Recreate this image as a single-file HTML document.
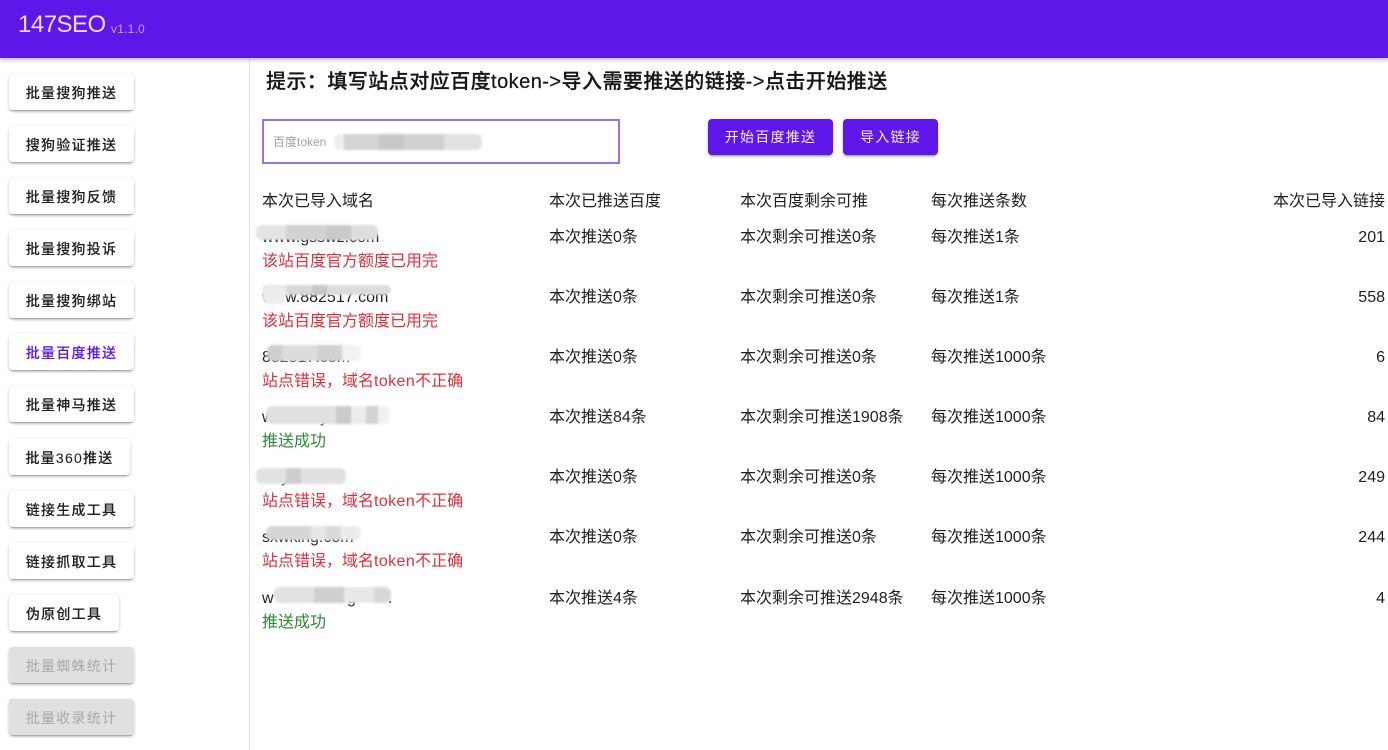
<!DOCTYPE html>
<html lang="zh-CN"><head><meta charset="utf-8"><title>147SEO</title>
<style>
html,body{margin:0;padding:0;background:#fff}
body{position:relative;width:1388px;height:750px;overflow:hidden;font-family:"Liberation Sans","Noto Sans CJK SC",sans-serif;color:#1f1f1f}
.t{position:absolute;font-size:16px;line-height:24px;white-space:nowrap;height:24px}
.r{text-align:right;right:3px}
.red{color:#e0303a}.green{color:#2f8a35}
.k{letter-spacing:.4px}
#bar{position:absolute;left:0;top:0;width:1388px;height:58px;background:#5f16e8;box-shadow:0 2px 4px rgba(60,0,160,.3);z-index:3}
#bar .n{position:absolute;left:18px;top:10px;font-size:24px;line-height:30px;color:#e9deff;letter-spacing:-.5px}
#bar .v{position:absolute;left:111px;top:21px;font-size:12px;line-height:16px;color:#c3a8f6;letter-spacing:.2px}
#side{position:absolute;left:249px;top:58px;width:1px;height:692px;background:#e6e6e6}
.b{position:absolute;left:9px;height:36px;width:125px;border-radius:4px;background:#fff;box-shadow:0 3px 1px -2px rgba(0,0,0,.2),0 2px 2px 0 rgba(0,0,0,.14),0 1px 5px 0 rgba(0,0,0,.12);font-size:14px;line-height:38px;text-align:center;letter-spacing:1.25px;font-weight:500;color:#1f1f1f;-webkit-text-stroke:.1px currentColor}
.b.a{color:#5f16e8}
.b.d{background:#e0e0e0;color:#a8a8a8;font-weight:400;-webkit-text-stroke:0}
.b.p{background:#5f16e8;color:#f4eeff;top:119px;line-height:36px;font-weight:400;-webkit-text-stroke:0}
#h{position:absolute;left:266px;top:68px;font-size:20px;line-height:28px;font-weight:500;letter-spacing:.46px;color:#161616;white-space:nowrap;-webkit-text-stroke:.25px #161616}
#inp{position:absolute;left:262px;top:119px;width:354px;height:41px;border:2px solid #9672ee}
#inp span{position:absolute;left:9px;top:12px;font-size:12px;line-height:18px;color:#a0a0a0}
.m{position:absolute;height:16px;border-radius:6px;filter:blur(1px);z-index:2}
</style></head><body>
<div id="bar"><span class="n">147SEO</span><span class="v">v1.1.0</span></div>
<div id="side"></div>

<div class="b" style="top:74px">批量搜狗推送</div>
<div class="b" style="top:126px">搜狗验证推送</div>
<div class="b" style="top:178px">批量搜狗反馈</div>
<div class="b" style="top:230px">批量搜狗投诉</div>
<div class="b" style="top:282px">批量搜狗绑站</div>
<div class="b a" style="top:334px">批量百度推送</div>
<div class="b" style="top:386px">批量神马推送</div>
<div class="b" style="top:439px;width:121px">批量360推送</div>
<div class="b" style="top:491px">链接生成工具</div>
<div class="b" style="top:543px">链接抓取工具</div>
<div class="b" style="top:595px;width:110px">伪原创工具</div>
<div class="b d" style="top:647px">批量蜘蛛统计</div>
<div class="b d" style="top:699px">批量收录统计</div>

<div id="h">提示：填写站点对应百度token-&gt;导入需要推送的链接-&gt;点击开始推送</div>
<div id="inp"><span>百度token</span></div>
<div class="m" style="left:334px;top:134px;width:148px;background:linear-gradient(90deg,#eee 0 10px,#d4d4d4 10px 45px,#c8c8c8 45px 70px,#d0d0d0 70px 110px,#e2e2e2 110px)"></div>
<div class="b p" style="left:708px">开始百度推送</div>
<div class="b p" style="left:843px;width:95px">导入链接</div>

<div class="t" style="left:262px;top:190px">本次已导入域名</div>
<div class="t" style="left:549px;top:190px">本次已推送百度</div>
<div class="t" style="left:740px;top:190px">本次百度剩余可推</div>
<div class="t" style="left:931px;top:190px">每次推送条数</div>
<div class="t r" style="top:190px">本次已导入链接</div>

<div class="t" style="left:262px;top:226px">www.gsswz.com</div>
<div class="m" style="left:256px;top:225px;width:122px;height:15px;background:linear-gradient(90deg,#e4e4e4 0 30px,#d2d2d2 30px 70px,#c9c9c9 70px 95px,#dedede 95px)"></div>
<div class="t red" style="left:262px;top:250px">该站百度官方额度已用完</div>
<div class="t" style="left:549px;top:226px">本次推送0条</div>
<div class="t" style="left:740px;top:226px">本次剩余可推送0条</div>
<div class="t" style="left:931px;top:226px">每次推送1条</div>
<div class="t r" style="top:226px">201</div>

<div class="t" style="left:262px;top:286px">www.882517.com</div>
<div class="m" style="left:262px;top:285px;width:129px;height:10px;background:linear-gradient(90deg,#e8e8e8 0 25px,#d8d8d8 25px 50px,#c6c6c6 50px 65px,#dcdcdc 65px)"></div>
<div class="m" style="left:262px;top:287px;width:24px;height:17px;background:#ededed"></div>
<div class="t red" style="left:262px;top:310px">该站百度官方额度已用完</div>
<div class="t" style="left:549px;top:286px">本次推送0条</div>
<div class="t" style="left:740px;top:286px">本次剩余可推送0条</div>
<div class="t" style="left:931px;top:286px">每次推送1条</div>
<div class="t r" style="top:286px">558</div>

<div class="t" style="left:262px;top:346px">882517.com</div>
<div class="m" style="left:267px;top:345px;width:94px;height:16px;background:linear-gradient(90deg,#cfcfcf 0 15px,#dcdcdc 15px 50px,#d2d2d2 50px 75px,#f2f2f2 75px)"></div>
<div class="t red" style="left:262px;top:370px">站点错误，域名<span class="k">token</span>不正确</div>
<div class="t" style="left:549px;top:346px">本次推送0条</div>
<div class="t" style="left:740px;top:346px">本次剩余可推送0条</div>
<div class="t" style="left:931px;top:346px">每次推送1000条</div>
<div class="t r" style="top:346px">6</div>

<div class="t" style="left:262px;top:406px">w</div>
<div class="t" style="left:320px;top:406px">y</div>
<div class="m" style="left:266px;top:406px;width:124px;height:18px;background:linear-gradient(90deg,#e0e0e0 0 70px,#cbcbcb 70px 85px,#ececec 85px 100px,#d2d2d2 100px 112px,#f0f0f0 112px)"></div>
<div class="t green" style="left:262px;top:430px">推送成功</div>
<div class="t" style="left:549px;top:406px">本次推送84条</div>
<div class="t" style="left:740px;top:406px">本次剩余可推送1908条</div>
<div class="t" style="left:931px;top:406px">每次推送1000条</div>
<div class="t r" style="top:406px">84</div>

<div class="t" style="left:281px;top:466px">y</div>
<div class="m" style="left:256px;top:468px;width:90px;background:linear-gradient(90deg,#e2e2e2 0 30px,#cdcdcd 30px 45px,#e0e0e0 45px)"></div>
<div class="t red" style="left:262px;top:490px">站点错误，域名<span class="k">token</span>不正确</div>
<div class="t" style="left:549px;top:466px">本次推送0条</div>
<div class="t" style="left:740px;top:466px">本次剩余可推送0条</div>
<div class="t" style="left:931px;top:466px">每次推送1000条</div>
<div class="t r" style="top:466px">249</div>

<div class="t" style="left:262px;top:526px">sxwking.com</div>
<div class="m" style="left:266px;top:526px;width:95px;height:14px;background:linear-gradient(90deg,#d6d6d6 0 45px,#e6e6e6 45px 60px,#dadada 60px 75px,#ebebeb 75px)"></div>
<div class="t red" style="left:262px;top:550px">站点错误，域名<span class="k">token</span>不正确</div>
<div class="t" style="left:549px;top:526px">本次推送0条</div>
<div class="t" style="left:740px;top:526px">本次剩余可推送0条</div>
<div class="t" style="left:931px;top:526px">每次推送1000条</div>
<div class="t r" style="top:526px">244</div>

<div class="t" style="left:262px;top:587px">w</div>
<div class="t" style="left:347px;top:587px">g</div>
<div class="t" style="left:388px;top:587px">.</div>
<div class="m" style="left:274px;top:587px;width:117px;height:16px;background:linear-gradient(90deg,#e2e2e2 0 40px,#cfcfcf 40px 70px,#e8e8e8 70px 100px,#d8d8d8 100px)"></div>
<div class="t green" style="left:262px;top:611px">推送成功</div>
<div class="t" style="left:549px;top:587px">本次推送4条</div>
<div class="t" style="left:740px;top:587px">本次剩余可推送2948条</div>
<div class="t" style="left:931px;top:587px">每次推送1000条</div>
<div class="t r" style="top:587px">4</div>
</body></html>
